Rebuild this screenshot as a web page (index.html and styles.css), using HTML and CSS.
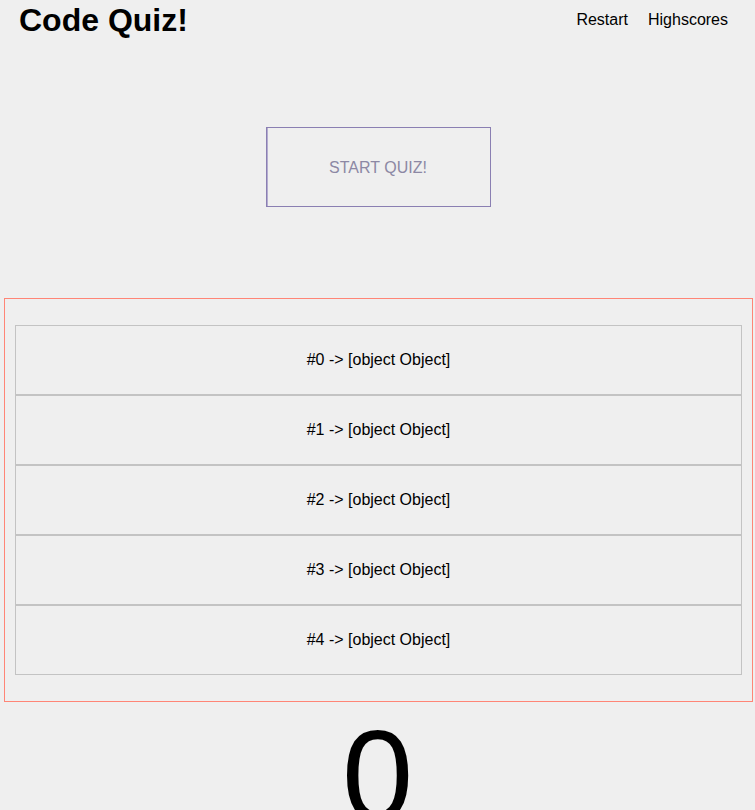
FILE: index.html
```html
<!DOCTYPE html>
<html>
<head>
<meta charset="utf-8">
<title>Code Quiz!</title>
<link rel="stylesheet" href="styles.css">
</head>
<body>
<header class="top-bar">
  <h1 class="title">Code Quiz!</h1>
  <nav class="nav">
    <a class="nav-link" href="#">Restart</a>
    <a class="nav-link" href="#">Highscores</a>
  </nav>
</header>
<section class="start-area">
  <button class="start-btn">START QUIZ!</button>
</section>
<section class="question-box">
  <div class="choice">#0 -&gt; [object Object]</div>
  <div class="choice">#1 -&gt; [object Object]</div>
  <div class="choice">#2 -&gt; [object Object]</div>
  <div class="choice">#3 -&gt; [object Object]</div>
  <div class="choice">#4 -&gt; [object Object]</div>
</section>
<div class="score">0</div>
</body>
</html>
```
FILE: styles.css
```css
html, body {
  margin: 0;
  padding: 0;
  background: #efefef;
  font-family: "Liberation Sans", Arial, sans-serif;
  color: #000;
}
.top-bar {
  display: flex;
  justify-content: space-between;
  align-items: flex-start;
  padding: 2px 27px 0 19px;
}
.title {
  margin: 0;
  font-size: 32px;
  font-weight: bold;
  line-height: normal;
}
.nav {
  display: flex;
  gap: 20px;
  margin-top: 9px;
  font-size: 16px;
}
.nav-link {
  color: #000;
  text-decoration: none;
}
.start-area {
  display: flex;
  justify-content: center;
  padding-top: 88px;
  padding-bottom: 91px;
}
.start-btn {
  box-sizing: border-box;
  width: 225px;
  height: 80px;
  background: transparent;
  border: 1px solid #8a7fb2;
  box-shadow: inset 1px 0 0 #b4acd0;
  color: #8c88a4;
  font-family: "Liberation Sans", Arial, sans-serif;
  font-size: 16px;
  padding: 2px 0 0;
  margin-left: 1px;
}
.question-box {
  margin: 0 2px 0 4px;
  border: 1px solid #ff8576;
  padding: 26px 10px;
}
.choice {
  box-sizing: border-box;
  height: 70px;
  border: 1px solid #c3c3c3;
  display: flex;
  align-items: center;
  justify-content: center;
  font-size: 16px;
}
.score {
  text-align: center;
  font-size: 128px;
  line-height: normal;
  margin-top: 0;
}
```
